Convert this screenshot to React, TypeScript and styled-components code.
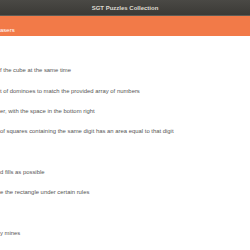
import React from "react";
import styled, { createGlobalStyle } from "styled-components";

const Global = createGlobalStyle`
  html, body { margin: 0; padding: 0; background: #ffffff; }
  body { width: 250px; height: 250px; overflow: hidden; font-family: "Liberation Sans", Arial, sans-serif; }
`;

const Window = styled.div`
  width: 250px;
  height: 250px;
  display: flex;
  flex-direction: column;
  overflow: hidden;
  background: #ffffff;
`;

const TitleBar = styled.div`
  height: 15px;
  flex: none;
  display: flex;
  align-items: center;
  justify-content: center;
  background: linear-gradient(#4a4945, #3b3a36);
  border-bottom: 1px solid #5e5c55;
  color: #dfdbd2;
  font-size: 6px;
  font-weight: bold;
`;

const Header = styled.div`
  height: 20px;
  flex: none;
  display: flex;
  align-items: flex-end;
  padding-bottom: 3px;
  box-sizing: border-box;
  background: #f27a48;
  color: #ffffff;
  font-size: 6px;
  white-space: nowrap;
  overflow: hidden;
`;

const List = styled.div`
  display: flex;
  flex-direction: column;
  padding-top: 4px;
`;

const Row = styled.div`
  height: 20.3px;
  display: flex;
  align-items: center;
  color: #555555;
  font-size: 5.9px;
  white-space: nowrap;
`;

const rows: string[] = [
  "",
  "f the cube at the same time",
  "t of dominoes to match the provided array of numbers",
  "er, with the space in the bottom right",
  "of squares containing the same digit has an area equal to that digit",
  "",
  "d fills as possible",
  "e the rectangle under certain rules",
  "",
  "y mines",
  "",
];

export default function App() {
  return (
    <Window>
      <Global />
      <TitleBar>SGT Puzzles Collection</TitleBar>
      <Header>asers</Header>
      <List>
        {rows.map((r, i) => (
          <Row key={i}>{r}</Row>
        ))}
      </List>
    </Window>
  );
}
